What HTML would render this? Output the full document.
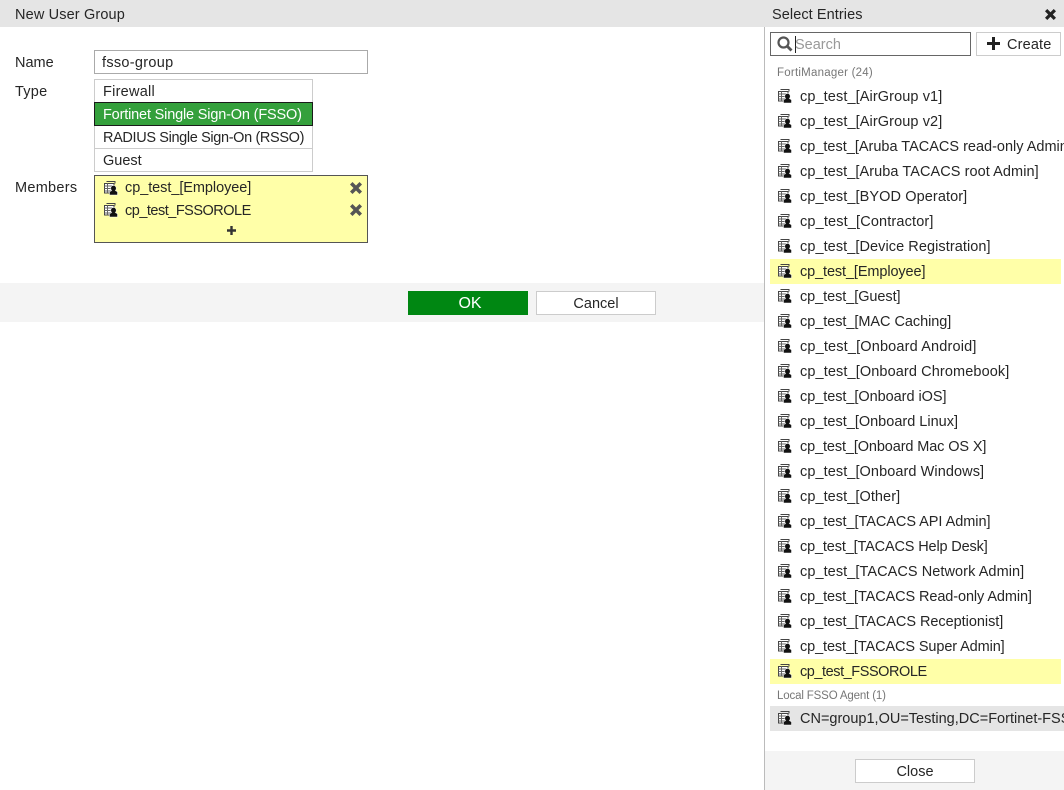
<!DOCTYPE html>
<html><head><meta charset="utf-8"><style>
html,body{margin:0;padding:0;background:#fff}
body{width:1064px;height:790px;position:relative;overflow:hidden;font-family:"Liberation Sans",sans-serif;font-size:14.5px;color:#262626}
.a{position:absolute;box-sizing:border-box;white-space:nowrap}
.t{position:absolute;white-space:nowrap;line-height:20px;height:20px}
.row{position:absolute;left:770px;width:291px;height:25px}
.row svg{position:absolute;left:8px;top:5px}
.row span{position:absolute;left:30px;top:3px;line-height:20px;white-space:nowrap}
.lbl{position:absolute;left:777px;font-size:11.5px;color:#777;line-height:14px;white-space:nowrap}
</style></head><body>
<svg width="0" height="0" style="position:absolute"><defs><g id="ic">
<path d="M2.500 .5h8.500v2" fill="none" stroke="#444"/>
<path d="M.5 2.500h9.500v9.500H.5z" fill="#fff" stroke="#444"/><path d="M.5 5h9.500M3.500 2.500v9.500M.5 7.500h9.500M.5 10h9.500" stroke="#666" fill="none"/>
<path d="M9.500 4.500c1.700 0 2.700 1.300 2.700 2.800 0 1-.4 1.800-1 2.300l2.300 1.200V14H5.500v-3.200l2.300-1.200c-.6-.5-1-1.300-1-2.300 0-1.500 1-2.800 2.700-2.800z" fill="#111" stroke="#fff" stroke-width=".5"/>
</g><path id="x" d="M2.500 0 6 3.500 9.500 0 12 2.500 8.500 6 12 9.500 9.500 12 6 8.500 2.500 12 0 9.500 3.500 6 0 2.500z"/></defs></svg>

<div class="a" style="left:0;top:0;width:1064px;height:27px;background:#e5e5e5"></div>
<div class="t" style="left:15px;top:5px;letter-spacing:.14px">New User Group</div>
<div class="t" style="left:772px;top:5px;letter-spacing:.08px">Select Entries</div>
<svg class="a" style="left:1045px;top:9px" width="11" height="11" viewBox="0 0 12 12" fill="#222"><use href="#x"/></svg>

<div class="t" style="left:15px;top:53px">Name</div>
<div class="a" style="left:94px;top:50px;width:274px;height:24px;border:1px solid #aaa"></div>
<div class="t" style="left:102px;top:53px;letter-spacing:.3px">fsso-group</div>
<div class="t" style="left:15px;top:82px;letter-spacing:.25px">Type</div>
<div class="a" style="left:94px;top:79px;width:219px;height:93px;border:1px solid #ccc"></div>
<div class="a" style="left:94px;top:148px;width:219px;height:1px;background:#ccc"></div>
<div class="a" style="left:94px;top:102px;width:219px;height:24px;background:#34a03c;border:1px solid #1a1a1a"></div>
<div class="t" style="left:103px;top:82px;letter-spacing:.25px">Firewall</div>
<div class="t" style="left:103px;top:105px;color:#fff;letter-spacing:-.17px">Fortinet Single Sign-On (FSSO)</div>
<div class="t" style="left:103px;top:128px;letter-spacing:-.36px">RADIUS Single Sign-On (RSSO)</div>
<div class="t" style="left:103px;top:151px">Guest</div>
<div class="t" style="left:15px;top:178px;letter-spacing:.28px">Members</div>
<div class="a" style="left:94px;top:175px;width:274px;height:68px;background:#ffffa8;border:1px solid #555"></div>
<svg class="a" style="left:104px;top:181px" width="15" height="15"><use href="#ic"/></svg>
<svg class="a" style="left:104px;top:203px" width="15" height="15"><use href="#ic"/></svg>
<div class="t" style="left:125px;top:178px;letter-spacing:-.06px">cp_test_[Employee]</div>
<div class="t" style="left:125px;top:201px;letter-spacing:-.5px">cp_test_FSSOROLE</div>
<svg class="a" style="left:350px;top:182px" width="12" height="12" fill="#555"><use href="#x"/></svg>
<svg class="a" style="left:350px;top:204px" width="12" height="12" fill="#555"><use href="#x"/></svg>
<svg class="a" style="left:227px;top:226px" width="9" height="9" fill="#333"><path d="M3.300 0h2.400v3.300H9v2.400H5.700V9H3.300V5.700H0V3.300h3.300z"/></svg>

<div class="a" style="left:0;top:283px;width:764px;height:39px;background:#f4f4f4"></div>
<div class="a" style="left:408px;top:291px;width:120px;height:24px;background:#008712;color:#fff;text-align:center;line-height:26px;font-size:16px;padding-left:4px">OK</div>
<div class="a" style="left:536px;top:291px;width:120px;height:24px;background:#fff;border:1px solid #ccc;text-align:center;line-height:24px">Cancel</div>

<div class="a" style="left:764px;top:27px;width:1px;height:763px;background:#bbb"></div>
<div class="a" style="left:770px;top:32px;width:201px;height:24px;border:1px solid #666"></div>
<svg class="a" style="left:777px;top:36px" width="17" height="16" fill="none"><circle cx="6.500" cy="6.500" r="5" stroke="#555" stroke-width="2.200"/><path d="M10 10l4.500 4.500" stroke="#555" stroke-width="2.800"/></svg>
<div class="a" style="left:795px;top:36px;width:1px;height:17px;background:#222"></div>
<div class="t" style="left:795px;top:35px;color:#999">Search</div>
<div class="a" style="left:976px;top:32px;width:85px;height:24px;border:1px solid #ccc"></div>
<svg class="a" style="left:987px;top:37px" width="13" height="13" fill="#222"><path d="M5 0h3v5h5v3H8v5H5V8H0V5h5z"/></svg>
<div class="t" style="left:1007px;top:35px;letter-spacing:.15px">Create</div>
<div class="lbl" style="top:66px;letter-spacing:.23px">FortiManager (24)</div>

<div class="row" style="top:84px"><svg width="15" height="15"><use href="#ic"/></svg><span style="letter-spacing:.1px">cp_test_[AirGroup v1]</span></div>
<div class="row" style="top:109px"><svg width="15" height="15"><use href="#ic"/></svg><span style="letter-spacing:.1px">cp_test_[AirGroup v2]</span></div>
<div class="row" style="top:134px;overflow:hidden;width:294px"><svg width="15" height="15"><use href="#ic"/></svg><span>cp_test_[Aruba TACACS read-only Admin]</span></div>
<div class="row" style="top:159px"><svg width="15" height="15"><use href="#ic"/></svg><span style="letter-spacing:.07px">cp_test_[Aruba TACACS root Admin]</span></div>
<div class="row" style="top:184px"><svg width="15" height="15"><use href="#ic"/></svg><span style="letter-spacing:.09px">cp_test_[BYOD Operator]</span></div>
<div class="row" style="top:209px"><svg width="15" height="15"><use href="#ic"/></svg><span style="letter-spacing:.15px">cp_test_[Contractor]</span></div>
<div class="row" style="top:234px"><svg width="15" height="15"><use href="#ic"/></svg><span style="letter-spacing:.07px">cp_test_[Device Registration]</span></div>
<div class="row" style="top:259px;background:#ffffa8"><svg width="15" height="15"><use href="#ic"/></svg><span style="letter-spacing:-.11px">cp_test_[Employee]</span></div>
<div class="row" style="top:284px"><svg width="15" height="15"><use href="#ic"/></svg><span style="letter-spacing:-.07px">cp_test_[Guest]</span></div>
<div class="row" style="top:309px"><svg width="15" height="15"><use href="#ic"/></svg><span style="letter-spacing:-.05px">cp_test_[MAC Caching]</span></div>
<div class="row" style="top:334px"><svg width="15" height="15"><use href="#ic"/></svg><span style="letter-spacing:.16px">cp_test_[Onboard Android]</span></div>
<div class="row" style="top:359px"><svg width="15" height="15"><use href="#ic"/></svg><span style="letter-spacing:.11px">cp_test_[Onboard Chromebook]</span></div>
<div class="row" style="top:384px"><svg width="15" height="15"><use href="#ic"/></svg><span style="letter-spacing:-.05px">cp_test_[Onboard iOS]</span></div>
<div class="row" style="top:409px"><svg width="15" height="15"><use href="#ic"/></svg><span>cp_test_[Onboard Linux]</span></div>
<div class="row" style="top:434px"><svg width="15" height="15"><use href="#ic"/></svg><span style="letter-spacing:-.12px">cp_test_[Onboard Mac OS X]</span></div>
<div class="row" style="top:459px"><svg width="15" height="15"><use href="#ic"/></svg><span style="letter-spacing:.08px">cp_test_[Onboard Windows]</span></div>
<div class="row" style="top:484px"><svg width="15" height="15"><use href="#ic"/></svg><span style="letter-spacing:.07px">cp_test_[Other]</span></div>
<div class="row" style="top:509px"><svg width="15" height="15"><use href="#ic"/></svg><span style="letter-spacing:-.04px">cp_test_[TACACS API Admin]</span></div>
<div class="row" style="top:534px"><svg width="15" height="15"><use href="#ic"/></svg><span style="letter-spacing:-.15px">cp_test_[TACACS Help Desk]</span></div>
<div class="row" style="top:559px"><svg width="15" height="15"><use href="#ic"/></svg><span style="letter-spacing:.07px">cp_test_[TACACS Network Admin]</span></div>
<div class="row" style="top:584px"><svg width="15" height="15"><use href="#ic"/></svg><span style="letter-spacing:-.1px">cp_test_[TACACS Read-only Admin]</span></div>
<div class="row" style="top:609px"><svg width="15" height="15"><use href="#ic"/></svg><span style="letter-spacing:-.04px">cp_test_[TACACS Receptionist]</span></div>
<div class="row" style="top:634px"><svg width="15" height="15"><use href="#ic"/></svg><span style="letter-spacing:-.11px">cp_test_[TACACS Super Admin]</span></div>
<div class="row" style="top:659px;background:#ffffa8"><svg width="15" height="15"><use href="#ic"/></svg><span style="letter-spacing:-.44px">cp_test_FSSOROLE</span></div>
<div class="lbl" style="top:689px;letter-spacing:-.15px">Local FSSO Agent (1)</div>
<div class="row" style="top:706px;overflow:hidden;width:294px;background:#e5e5e5"><svg width="15" height="15"><use href="#ic"/></svg><span>CN=group1,OU=Testing,DC=Fortinet-FSSO,DC=COM</span></div>

<div class="a" style="left:765px;top:751px;width:299px;height:39px;background:#f4f4f4"></div>
<div class="a" style="left:855px;top:759px;width:120px;height:24px;background:#fff;border:1px solid #ccc;text-align:center;line-height:24px">Close</div>
</body></html>
